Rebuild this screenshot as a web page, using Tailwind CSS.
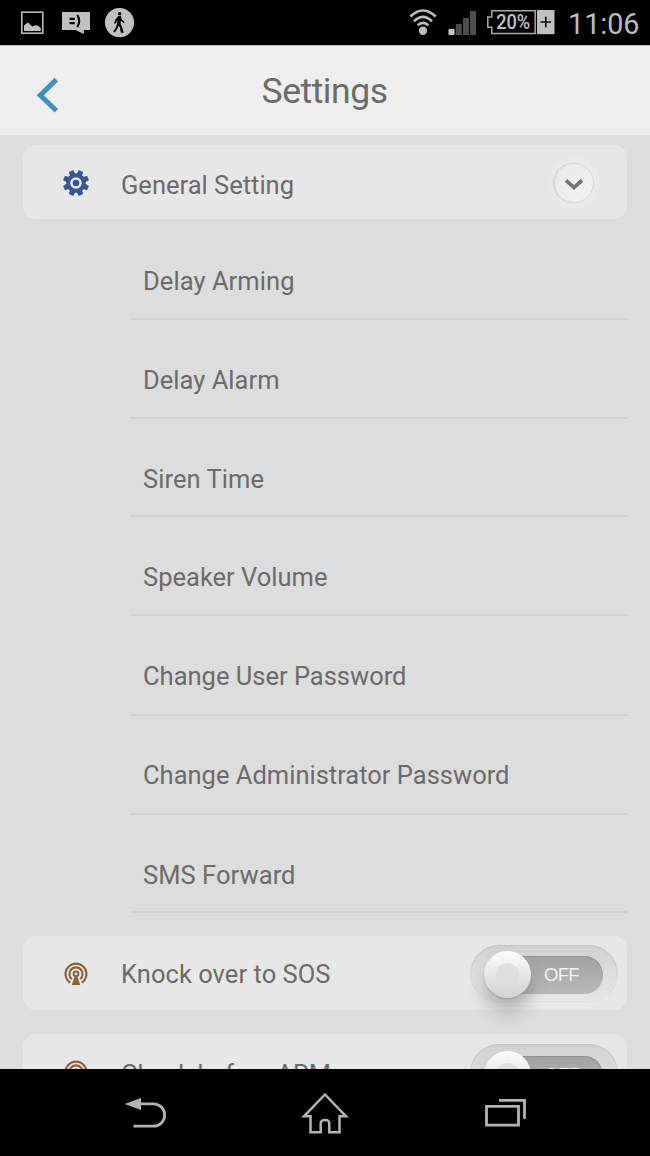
<!DOCTYPE html>
<html lang="en">
<head>
<meta charset="utf-8">
<title>Settings</title>
<script src="https://cdn.jsdelivr.net/npm/@tailwindcss/browser@4"></script>
</head>
<body class="w-[650px] h-[1156px] overflow-hidden bg-black font-['Roboto',sans-serif] text-[#6b6b6b] flex flex-col">
<svg width="0" height="0" class="hidden">
  <symbol id="podcast" viewBox="0 0 26 26">
    <g fill="none" stroke="#8b6338">
      <path d="M7.2 21.6A10.4 10.4 0 1 1 18.8 21.6" stroke-width="2.2"/>
      <path d="M9 18.2A6.6 6.6 0 1 1 17 18.2" stroke-width="2.1"/>
      <circle cx="13" cy="12.8" r="2.4" stroke-width="2"/>
    </g>
    <path d="M12 14.500h2l3.300 9.500H8.700z" fill="#8b6338"/>
  </symbol>
</svg>

<div class="h-[45px] shrink-0 flex justify-between">
  <svg width="150" height="45" viewBox="0 0 150 45">
    <rect x="21.8" y="12.2" width="21" height="21" fill="none" stroke="#b9b9b9" stroke-width="1.6"/>
    <path d="M24 31V25.5L26 23.8 28.3 22.6 30.5 25 32.5 26.4 35 25.2 37.5 25.4 40.8 28V31z" fill="#c0c0c0"/>
    <path d="M62 12H90V30H83.8V34L75.5 30H62z" fill="#c0c0c0"/>
    <path d="M69.500 18.8H74.8M69.500 23.2H74.8M77.3 15Q81 21 77.3 27" fill="none" stroke="#000" stroke-width="2.2"/>
    <circle cx="119.5" cy="22.6" r="14.6" fill="#c0c0c0"/>
    <circle cx="119.7" cy="13.7" r="1.7"/>
    <path d="M118 16.2 120.7 15.8 121.8 19.4 124.6 22 123.9 23 120.7 20.8V24.2L122 27 123.7 32.7H120.9L120 27.8 118.7 25.6 117.8 28 114.8 32.6 113.3 31.5 116.2 27 117.3 22V19.7L116.4 22.4 114.7 24.1 114.2 23.1 115.2 20z"/>
  </svg>
  <div class="flex">
    <svg width="157" height="45" viewBox="400 0 157 45">
      <g fill="none" stroke="#bdbdbd" stroke-width="2.6">
        <path d="M410.3 16.5Q423 4.5 435.7 16.5"/>
        <path d="M414 21.2Q423 12.7 432 21.2"/>
        <path d="M417.6 25.3Q423 20.5 428.4 25.3"/>
      </g>
      <circle cx="423" cy="30.8" r="4.2" fill="#bdbdbd"/>
      <rect x="448.5" y="29" width="6" height="6" fill="#c4c4c4"/>
      <path d="M455.8 24h6v11h-6zM463 18h6v17h-6zM470 11h6v24h-6z" fill="#4d4d4d"/>
      <path d="M491.8 10.8H535.2V33.4H491.8V27.2H487.8V17H491.8z" fill="none" stroke="#a8a8a8" stroke-width="1.5"/>
      <rect x="537" y="10" width="17.5" height="24.2" fill="#c0c0c0"/>
      <path d="M540.5 22H551M545.8 16.8V27.3" stroke="#111" stroke-width="1.7"/>
      <text x="496.2" y="29" font-size="19.5" font-weight="500" textLength="34" lengthAdjust="spacingAndGlyphs" fill="#c0c0c0">20%</text>
    </svg>
    <svg width="93" height="45" viewBox="557 0 93 45"><text x="568" y="33.8" font-size="29.5" textLength="71.500" lengthAdjust="spacingAndGlyphs" fill="#bcbcbc">11:06</text></svg>
  </div>
</div>

<header class="h-[90px] shrink-0 bg-[#eeeeee] border-t border-[#c8c8c8] flex items-center">
  <svg class="shrink-0" width="80" height="90" viewBox="0 45 80 90"><path d="M56.4 78.600 40.3 94.200 56.4 109.800" fill="none" stroke="#428fbf" stroke-width="5" stroke-linejoin="miter"/></svg>
  <h1 class="grow text-center pr-[80px] text-[35px] leading-[40px] pb-[1px]"><svg class="inline-block align-top" width="130" height="46" viewBox="260 68 130 46"><text x="261.500" y="103.8" font-size="35.5" textLength="126.500" fill="#6b6b6b">Settings</text></svg></h1>
</header>

<main class="h-[934px] shrink-0 bg-[#dddddd] overflow-hidden px-[23px] pt-[10px]">
  <section class="h-[74px] rounded-[13px] bg-[#e7e7e7] flex items-center">
    <svg class="ml-[38px] mt-[1px]" width="30" height="30" viewBox="-15 -15 30 30">
      <g fill="#3b558f">
        <g id="teeth"><path id="t" d="M-2.4-13H2.4L2.9-8H-2.9z" transform="rotate(22.5)"/><use href="#t" transform="rotate(45)"/><use href="#t" transform="rotate(90)"/><use href="#t" transform="rotate(135)"/></g>
        <use href="#teeth" transform="rotate(180)"/>
      </g>
      <circle r="7.8" fill="none" stroke="#3b558f" stroke-width="4"/><circle r="3.3" fill="#3b558f"/>
    </svg>
    <svg class="ml-[26px]" width="220" height="40" viewBox="117 162 220 40"><text x="121" y="193.5" font-size="25.5" textLength="173" fill="#6b6b6b">General Setting</text></svg>
    <div class="ml-auto mr-[27px] mt-[2px] w-[52px] h-[52px] rounded-full bg-[#e9e9e9] flex items-center justify-center">
      <div class="w-[40px] h-[40px] rounded-full bg-linear-to-br from-[#e9e9e9] to-[#f2f2f2] border border-[#d6d6d6] shadow-[-1px_0_1px_#d0d0d0] flex items-center justify-center">
        <svg class="mt-[3px]" width="20" height="14" viewBox="0 0 20 14"><path d="M2 2.400 10 9.600 18 2.400" fill="none" stroke="#737373" stroke-width="3.7"/></svg>
      </div>
    </div>
  </section>

  <ul class="ml-[107px] -mr-[1px]">
    <li class="h-[101px] border-b-2 border-[#d2d2d2] flex items-end"><svg class="ml-[10px] mb-[20px]" width="400" height="36" viewBox="140 0 400 36"><text x="143" y="27.5" font-size="25.5" textLength="151.500" fill="#6b6b6b">Delay Arming</text></svg></li>
    <li class="h-[99px] border-b-2 border-[#d2d2d2] flex items-end"><svg class="ml-[10px] mb-[20px]" width="400" height="36" viewBox="140 0 400 36"><text x="143" y="27.5" font-size="25.5" textLength="136.500" fill="#6b6b6b">Delay Alarm</text></svg></li>
    <li class="h-[98px] border-b-2 border-[#d2d2d2] flex items-end"><svg class="ml-[10px] mb-[19px]" width="400" height="36" viewBox="140 0 400 36"><text x="143" y="27.5" font-size="25.5" textLength="121" fill="#6b6b6b">Siren Time</text></svg></li>
    <li class="h-[99px] border-b-2 border-[#d2d2d2] flex items-end"><svg class="ml-[10px] mb-[20px]" width="400" height="36" viewBox="140 0 400 36"><text x="143" y="27.5" font-size="25.5" textLength="184.500" fill="#6b6b6b">Speaker Volume</text></svg></li>
    <li class="h-[100px] border-b-2 border-[#d2d2d2] flex items-end"><svg class="ml-[10px] mb-[21px]" width="400" height="36" viewBox="140 0 400 36"><text x="143" y="27.5" font-size="25.5" textLength="263.500" fill="#6b6b6b">Change User Password</text></svg></li>
    <li class="h-[99px] border-b-2 border-[#d2d2d2] flex items-end"><svg class="ml-[10px] mb-[20px]" width="400" height="36" viewBox="140 0 400 36"><text x="143" y="27" font-size="25.5" textLength="366.500" fill="#6b6b6b">Change Administrator Password</text></svg></li>
    <li class="h-[98px] border-b-2 border-[#d2d2d2] flex items-end"><svg class="ml-[10px] mb-[19px]" width="400" height="36" viewBox="140 0 400 36"><text x="143" y="27.5" font-size="25.5" textLength="152.500" fill="#6b6b6b">SMS Forward</text></svg></li>
  </ul>

  <section class="mt-[23px] h-[74px] rounded-[13px] bg-[#e7e7e7] flex items-center">
    <svg class="ml-[40px] mt-[2px]" width="26" height="26"><use href="#podcast"/></svg>
    <svg class="ml-[28px]" width="240" height="40" viewBox="117 953 240 40"><text x="121" y="983" font-size="25.5" textLength="209.500" fill="#6b6b6b">Knock over to SOS</text></svg>
    <div class="ml-auto mr-[9px] mt-[1px] w-[148px] h-[58px] rounded-full bg-linear-to-b from-[#d0d0d0] via-[#dedede] to-[#e6e6e6] shadow-[inset_0_1px_2px_#c3c3c3,0_1px_0_#eeeeee] flex items-center pl-[14px]">
      <div class="z-10 w-[47px] h-[47px] mt-[2px] rounded-full bg-linear-to-b from-[#fcfcfc] to-[#d2d2d2] shadow-[0_1px_1px_#999999,0_14px_17px_#00000038] flex items-center justify-center"><div class="w-[23px] h-[23px] rounded-full bg-[#dfdfdf]"></div></div>
      <div class="-ml-[41px] mt-[3px] w-[113px] h-[38px] rounded-full bg-linear-to-b from-[#a2a2a2] to-[#b8b8b8] shadow-[inset_0_1px_1px_#8f8f8f] flex items-center"><span class="ml-[54px] font-['Liberation_Sans',sans-serif] text-[18.5px] leading-[24px] tracking-[-0.7px] text-[#f3f3f3]">OFF</span></div>
    </div>
  </section>

  <section class="mt-[24px] h-[74px] rounded-[13px] bg-[#e7e7e7] flex items-center">
    <svg class="ml-[40px] mt-[1px]" width="26" height="26"><use href="#podcast"/></svg>
    <svg class="ml-[28px]" width="240" height="40" viewBox="117 953 240 40"><text x="121" y="984.500" font-size="25.5" textLength="210" fill="#6b6b6b">Check before ARM</text></svg>
    <div class="ml-auto mr-[9px] mt-[4px] w-[148px] h-[58px] rounded-full bg-linear-to-b from-[#d0d0d0] via-[#dedede] to-[#e6e6e6] shadow-[inset_0_1px_2px_#c3c3c3,0_1px_0_#eeeeee] flex items-center pl-[14px]">
      <div class="z-10 w-[47px] h-[47px] mt-[2px] rounded-full bg-linear-to-b from-[#fcfcfc] to-[#d2d2d2] shadow-[0_1px_1px_#999999,0_14px_17px_#00000038] flex items-center justify-center"><div class="w-[23px] h-[23px] rounded-full bg-[#dfdfdf]"></div></div>
      <div class="-ml-[41px] mt-[3px] w-[113px] h-[38px] rounded-full bg-linear-to-b from-[#a2a2a2] to-[#b8b8b8] shadow-[inset_0_1px_1px_#8f8f8f] flex items-center"><span class="ml-[54px] font-['Liberation_Sans',sans-serif] text-[18.5px] leading-[24px] tracking-[-0.7px] text-[#f3f3f3]">OFF</span></div>
    </div>
  </section>
</main>

<nav class="h-[87px] shrink-0 flex">
  <svg width="650" height="87" viewBox="0 1069 650 87" fill="none" stroke="#b3b3b3">
    <path d="M139 1103.800H153.500A11.200 11.200 0 0 1 153.500 1126.200H133.500" stroke-width="2.8"/>
    <path d="M124.500 1104 141 1098V1110z" fill="#b3b3b3" stroke="none"/>
    <path d="M325 1094.500 346 1116.300H339.500V1132.300H329.300V1123.500Q329.300 1120 325 1120T320.700 1123.500V1132.300H310.500V1116.300H304z" stroke-width="2.5"/>
    <path d="M486.500 1106.400H518.500V1125.200H486.500zM499 1100.300H524.500V1118.800" stroke-width="2.8"/>
  </svg>
</nav>
</body>
</html>
